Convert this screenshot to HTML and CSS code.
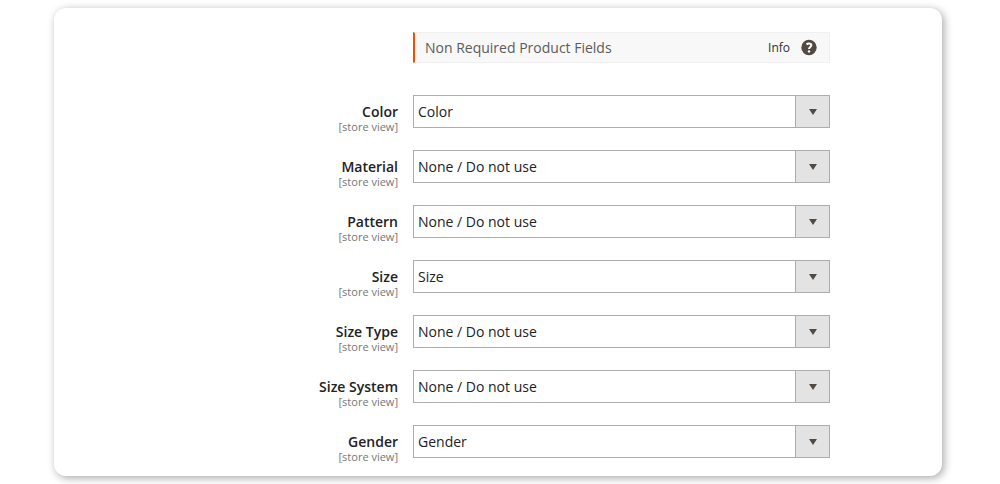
FILE: index.html
```html
<!DOCTYPE html>
<html lang="en">
  <head>
    <meta charset="UTF-8" />
    <title>Product Fields</title>
    <link rel="stylesheet" href="styles.css">
  </head>
  <body>
    <form class="panel">
      <div class="section-header">
        <h2>Non Required Product Fields</h2>
        <a class="info" href="#info">
          Info
          <svg class="info-icon" viewBox="0 0 16 16" aria-hidden="true">
            <circle cx="8" cy="7.5" r="7.7" fill="#514943" />
            <path d="M5.5 4.4C6.3 3.8 7.1 3.5 8 3.5C9.5 3.5 10.3 4.2 10.3 5.3C10.3 7 8 6.9 8 9.1" fill="none" stroke="#fff" stroke-width="2" />
            <circle cx="8" cy="11.4" r="1.2" fill="#fff" />
          </svg>
        </a>
      </div>

      <div class="field">
        <label for="color">Color <span>[store view]</span></label>
        <div class="select-wrap">
          <select id="color" name="color">
            <option>Color</option>
          </select>
        </div>
      </div>
      <div class="field">
        <label for="material">Material <span>[store view]</span></label>
        <div class="select-wrap">
          <select id="material" name="material">
            <option>None / Do not use</option>
          </select>
        </div>
      </div>
      <div class="field">
        <label for="pattern">Pattern <span>[store view]</span></label>
        <div class="select-wrap">
          <select id="pattern" name="pattern">
            <option>None / Do not use</option>
          </select>
        </div>
      </div>
      <div class="field">
        <label for="size">Size <span>[store view]</span></label>
        <div class="select-wrap">
          <select id="size" name="size">
            <option>Size</option>
          </select>
        </div>
      </div>
      <div class="field">
        <label for="sizeType">Size Type <span>[store view]</span></label>
        <div class="select-wrap">
          <select id="sizeType" name="sizeType">
            <option>None / Do not use</option>
          </select>
        </div>
      </div>
      <div class="field">
        <label for="sizeSystem">Size System <span>[store view]</span></label>
        <div class="select-wrap">
          <select id="sizeSystem" name="sizeSystem">
            <option>None / Do not use</option>
          </select>
        </div>
      </div>
      <div class="field">
        <label for="gender">Gender <span>[store view]</span></label>
        <div class="select-wrap">
          <select id="gender" name="gender">
            <option>Gender</option>
          </select>
        </div>
      </div>
    </form>
  </body>
</html>
```
FILE: styles.css
```css
* {
  box-sizing: border-box;
}

body {
  margin: 0;
  padding: 8px 58px 8px 54px;
  background-color: #fff;
  color: #222;
  font-family: "Open Sans", sans-serif;
  font-size: 14px;
}

.panel {
  display: flex;
  flex-direction: column;
  gap: 22px;
  padding: 24px 112px 18px;
  background: white;
  border-radius: 12px;
  box-shadow: 2px 2px 8px rgba(0, 0, 0, 0.35);
}

.section-header {
  display: flex;
  align-items: center;
  justify-content: space-between;
  height: 31px;
  margin: 0 0 10px 247px;
  padding: 0 12px 0 10px;
  background-color: #f8f8f8;
  border: 1px solid #f0f0f0;
  border-left: 2px solid #eb5202;
}

h2 {
  margin: 0;
  color: #5c5c5c;
  font-size: 14px;
  font-weight: 400;
}

.info {
  display: flex;
  align-items: center;
  gap: 11px;
  color: #303030;
  font-size: 12px;
  text-decoration: none;
}

.info-icon {
  width: 16px;
  height: 16px;
  overflow: visible;
}

.field {
  display: grid;
  grid-template-columns: 232px 1fr;
  gap: 15px;
  height: 33px;
}

.field label {
  padding-top: 8px;
  font-weight: 600;
  line-height: 18px;
  text-align: right;
}

.field label span {
  display: block;
  color: #777;
  font-size: 11px;
  font-weight: 400;
  line-height: 12px;
}

.select-wrap {
  position: relative;
}

select {
  width: 100%;
  height: 33px;
  padding: 0 40px 0 4px;
  appearance: none;
  background: white;
  border: 1px solid #adadad;
  border-radius: 0;
  color: #222;
  font: inherit;
}

/* arrow button drawn over the select */
.select-wrap::before {
  content: "";
  box-sizing: border-box;
  position: absolute;
  top: 0;
  right: 0;
  width: 35px;
  height: 33px;
  background-color: #e3e3e3;
  border: 1px solid #adadad;
  pointer-events: none;
}

.select-wrap::after {
  content: "";
  position: absolute;
  top: 14px;
  right: 13px;
  border: 4px solid transparent;
  border-top: 6px solid #514943;
  border-bottom: none;
  pointer-events: none;
}
```
